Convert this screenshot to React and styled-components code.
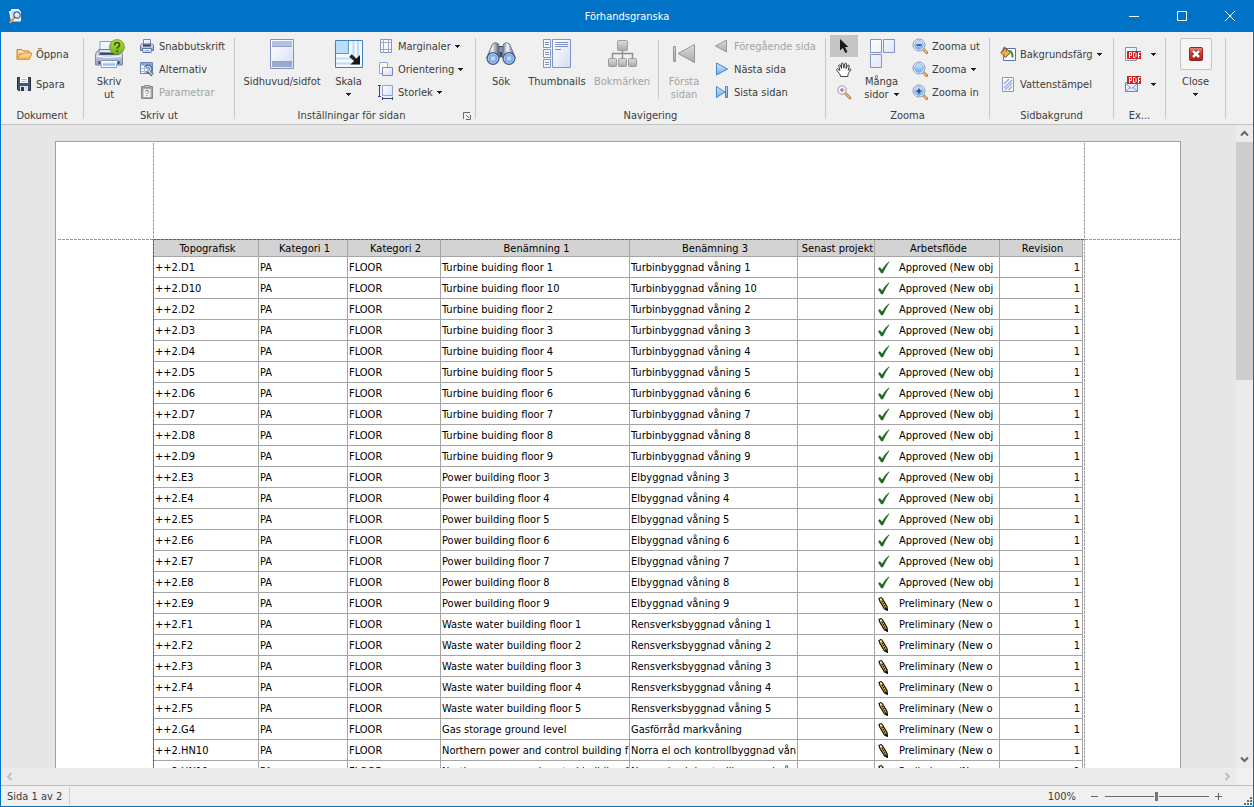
import React from 'react'
import styled, { createGlobalStyle } from 'styled-components'

const GlobalStyle = createGlobalStyle`
  * {
    box-sizing: border-box;
  }

  body {
    margin: 0;
    font-family: Tahoma, "DejaVu Sans Condensed", "DejaVu Sans", sans-serif;
    font-size: 11px;
    color: #3c3c3c;
  }

  button {
    border: 0;
    padding: 0;
    background: none;
    font: inherit;
    color: inherit;
  }

  svg {
    display: block;
    flex: none;
  }
`;

const Window = styled.div`
  display: flex;
  flex-direction: column;
  height: 100vh;
  overflow: hidden;
`;

const TitleBar = styled.header`
  display: grid;
  grid-template-columns: 1fr auto 1fr;
  align-items: center;
  flex: none;
  height: 32px;
  background: #0173c7;
  color: #fff;
`;

const SystemMenu = styled.div`
  padding-left: 8px;
`;

const Title = styled.h1`
  margin: 0;
  font-size: 11px;
  font-weight: normal;
`;

const WindowButtons = styled.div`
  display: flex;
  justify-content: flex-end;
`;

const WindowButton = styled.button`
  display: flex;
  align-items: center;
  justify-content: center;
  width: 48px;
  height: 32px;
`;

const Client = styled.div`
  display: flex;
  flex-direction: column;
  flex: 1;
  min-height: 0;
  border: solid #0173c7;
  border-width: 0 1px 1px;
  background: #f0f0f0;
`;

// Ribbon

const Ribbon = styled.nav`
  display: flex;
  flex: none;
  height: 93px;
  border-bottom: 1px solid #c3c3c3;
  background: #f0f0f0;
`;

const Group = styled.section`
  display: flex;
  flex-direction: column;
  flex: none;
  width: ${(p) => p.$width}px;
  padding-top: 3px;
`;

const GroupBody = styled.div`
  display: flex;
  height: 72px;
  padding-left: ${(p) => p.$start || 0}px;
  justify-content: ${(p) => (p.$center ? 'center' : 'flex-start')};
`;

const Caption = styled.div`
  display: flex;
  align-items: center;
  justify-content: center;
  height: 17px;
  padding-left: ${(p) => (p.$launcher ? 5 : 0)}px;
  line-height: 17px;
`;

const CaptionText = styled.span`
  flex: 1;
  text-align: center;
`;

const Launcher = styled.button`
  margin-right: 4px;
`;

const Separator = styled.div`
  flex: none;
  width: 1px;
  margin: 6px 0 5px;
  background: #c9c9c9;
`;

const InnerDivider = styled.div`
  width: 1px;
  margin: 5px 2px 8px 6px;
  background: #c9c9c9;
`;

const LargeButton = styled.button`
  display: flex;
  flex-direction: column;
  align-items: center;
  gap: 5px;
  width: ${(p) => p.$width}px;
  padding-top: 3px;
  line-height: 13px;
  white-space: nowrap;

  &:disabled {
    color: #a3a3a3;
  }
`;

const LargeLabel = styled.span`
  display: flex;
  flex-direction: column;
  align-items: center;
`;

const LabelLine = styled.span`
  display: flex;
  align-items: center;
  justify-content: center;
  gap: 5px;
  height: 13px;
`;

const Stack = styled.div`
  display: flex;
  flex-direction: column;
  gap: ${(p) => (p.$loose ? 8 : 1)}px;
  padding-top: ${(p) => (p.$loose ? 8 : 0)}px;
  margin-left: 4px;
`;

const SmallButton = styled.button`
  display: flex;
  align-items: center;
  gap: 4px;
  height: 22px;
  padding: 0 3px;
  line-height: 13px;
  white-space: nowrap;

  &:disabled {
    color: #a3a3a3;
  }
`;

const Tools = styled.div`
  display: flex;
  flex-direction: column;
  gap: 1px;
`;

const ToolButton = styled.button`
  display: flex;
  align-items: center;
  justify-content: center;
  width: 28px;
  height: 22px;
  background: ${(p) => (p.$active ? '#c5c5c5' : 'none')};
`;

const ExportButton = styled(SmallButton)`
  gap: 10px;
`;

const CloseFrame = styled.span`
  display: flex;
  align-items: center;
  justify-content: center;
  width: 32px;
  height: 32px;
  border: 1px solid #c6c6c6;
  border-radius: 2px;
  background: #f5f5f5;
`;

// Preview area

const Workspace = styled.main`
  display: grid;
  grid-template-columns: minmax(0, 1fr) 17px;
  grid-template-rows: minmax(0, 1fr) 17px;
  flex: 1;
  min-height: 0;
  border-bottom: 1px solid #bdbdbd;
  background: #e6e6e6;
`;

const Canvas = styled.div`
  overflow: hidden;
  padding: 16px 1px 0 0;
`;

const Paper = styled.div`
  display: grid;
  grid-template-columns: 97px auto 95px;
  grid-template-rows: 97px auto;
  width: max-content;
  margin: 0 auto;
  border: 1px solid #9f9f9f;
  background: #fff;
`;

const dashX = (color) => `repeating-linear-gradient(90deg, ${color} 0 3px, transparent 3px 4px)`;
const dashY = (color) => `repeating-linear-gradient(180deg, ${color} 0 3px, transparent 3px 4px)`;

const TopMargin = styled.div`
  grid-area: 1 / 2;
  margin-top: 1px;
  background: ${dashY('#9a9a9a')} left / 1px 100% no-repeat, ${dashY('#9a9a9a')} right / 1px 100% no-repeat;
`;

const SideMargin = styled.div`
  grid-area: 2 / ${(p) => (p.$left ? 1 : 3)};
  margin-left: ${(p) => (p.$left ? 2 : 0)}px;
  background: ${dashX('#9a9a9a')} top / 100% 1px no-repeat;
`;

const Printed = styled.div`
  grid-area: 2 / 2;
  padding: 1px 2px 0 1px;
  background:
    ${dashX('#5f5f5f')} top / 100% 1px no-repeat,
    ${dashY('#5f5f5f')} left / 1px 100% no-repeat,
    ${dashY('#9a9a9a')} right / 1px 100% no-repeat,
    linear-gradient(#a5a5a5, #a5a5a5) top / 100% 1px no-repeat,
    linear-gradient(#a5a5a5, #a5a5a5) left / 1px 100% no-repeat;
`;

const Table = styled.table`
  table-layout: fixed;
  width: 929px;
  border-spacing: 0;
  color: #000;
`;

const HeadCell = styled.th`
  height: 17px;
  padding: 0 0 0 3px;
  overflow: hidden;
  border: solid #a5a5a5;
  border-width: 0 1px 1px 0;
  background: #d3d3d3;
  font-weight: normal;
  line-height: 15px;
  white-space: nowrap;
`;

const Cell = styled.td`
  height: 21px;
  padding: 1px 2px 0 1px;
  overflow: hidden;
  border: solid #a5a5a5;
  border-width: 0 1px 1px 0;
  line-height: 19px;
  text-align: ${(p) => (p.$number ? 'right' : 'left')};
  white-space: nowrap;
`;

const Status = styled.span`
  display: flex;
  align-items: center;
  gap: 8px;
  padding-left: 1px;
`;

// Scroll bars

const VScroll = styled.div`
  display: flex;
  flex-direction: column;
  background: #ebebeb;
`;

const HScroll = styled.div`
  display: flex;
  justify-content: space-between;
  background: #ebebeb;
`;

const ScrollButton = styled.button`
  display: flex;
  flex: none;
  align-items: center;
  justify-content: center;
  width: 17px;
  height: 17px;
`;

const ScrollTrack = styled.div`
  flex: 1;
`;

const ScrollThumb = styled.div`
  height: 39%;
  background: #cdcdcd;
`;

const Corner = styled.div`
  background: #f0f0f0;
`;

// Status bar

const StatusBar = styled.footer`
  display: flex;
  flex: none;
  align-items: center;
  height: 20px;
  padding-left: 6px;
`;

const PageCount = styled.span`
  height: 18px;
  padding-right: 7px;
  border-right: 1px solid #cfcfcf;
  line-height: 19px;
`;

const ZoomBar = styled.div`
  display: flex;
  align-items: center;
  gap: 6px;
  margin-left: auto;
  padding-right: 21px;
`;

const ZoomLabel = styled.label`
  margin-right: 9px;
`;

const ZoomStep = styled.button`
  display: flex;
`;

const ZoomSlider = styled.input`
  appearance: none;
  width: 104px;
  height: 12px;
  margin: 0;
  background: linear-gradient(#6d6d6d, #6d6d6d) center / 100% 1px no-repeat;

  &::-webkit-slider-thumb {
    appearance: none;
    width: 5px;
    height: 9px;
    border: solid #f0f0f0;
    border-width: 0 1px;
    background: #757575;
  }
`;

const SizeGrip = styled.span`
  align-self: flex-end;
  margin: 0 1px 1px 0;
`;

// Icons

const Gradients = () => (
  <svg width="0" height="0" aria-hidden="true">
    <defs>
      <linearGradient id="paper" x1="0" y1="0" x2="1" y2="1">
        <stop offset="0" stopColor="#ffffff" />
        <stop offset="1" stopColor="#d3def5" />
      </linearGradient>
      <linearGradient id="sky" x1="0" y1="0" x2="0" y2="1">
        <stop offset="0" stopColor="#d6ecfc" />
        <stop offset="1" stopColor="#67aeea" />
      </linearGradient>
      <linearGradient id="gray" x1="0" y1="0" x2="0" y2="1">
        <stop offset="0" stopColor="#dcdcdc" />
        <stop offset="1" stopColor="#aaaaaa" />
      </linearGradient>
      <linearGradient id="steel" x1="0" y1="0" x2="0" y2="1">
        <stop offset="0" stopColor="#eef1f8" />
        <stop offset="1" stopColor="#8d9bbd" />
      </linearGradient>
      <linearGradient id="barrel" x1="0" y1="0" x2="1" y2="0">
        <stop offset="0" stopColor="#5a6684" />
        <stop offset=".4" stopColor="#f4f6fa" />
        <stop offset="1" stopColor="#3b4763" />
      </linearGradient>
      <linearGradient id="folder" x1="0" y1="0" x2="0" y2="1">
        <stop offset="0" stopColor="#ffe7b0" />
        <stop offset="1" stopColor="#f2b049" />
      </linearGradient>
      <radialGradient id="lens">
        <stop offset="0" stopColor="#d9f1ff" />
        <stop offset="1" stopColor="#4d8fe6" />
      </radialGradient>
      <linearGradient id="green" x1="0" y1="0" x2="0" y2="1">
        <stop offset="0" stopColor="#b8e23f" />
        <stop offset="1" stopColor="#6fb01a" />
      </linearGradient>
      <linearGradient id="red" x1="0" y1="0" x2="0" y2="1">
        <stop offset="0" stopColor="#e9887a" />
        <stop offset=".5" stopColor="#cf3a30" />
        <stop offset="1" stopColor="#a5201c" />
      </linearGradient>
    </defs>
  </svg>
);

const Icon = ({ size = 16, children }) => (
  <svg width={size} height={size} viewBox={`0 0 ${size} ${size}`} fill="none" aria-hidden="true">
    {children}
  </svg>
);

const Arrow = () => (
  <svg width="5" height="3" viewBox="0 0 5 3" aria-hidden="true">
    <path d="M0 0h5v1H4v1H3v1H2V2H1V1H0z" fill="#1e1e1e" />
  </svg>
);

const AppIcon = () => (
  <Icon>
    <path d="M1.500 3.500h2v-2h7l2 2V13H3.500z" fill="#e8eefb" stroke="#fff" />
    <path d="M4 4h3M4 6h2M4 8h1" stroke="#a8b8d8" />
    <path d="M6 10l-3.500 4" stroke="#e09a50" strokeWidth="2.400" strokeLinecap="round" />
    <circle cx="9" cy="7" r="3.200" fill="#cde9fb" stroke="#41618c" strokeWidth="1.200" />
    <path d="M7.600 7a1.600 1.600 0 0 1 1.600-1.600" stroke="#fff" />
  </Icon>
);

const FolderIcon = () => (
  <Icon>
    <path d="M1 13V3.500h4.500l1 1.500H13v2" fill="#f8cf83" stroke="#c5802c" />
    <path d="M2.500 5.500h3.300l1 1.200H12" stroke="#fff0cd" />
    <path d="M1 13.300L3.800 8H7l1-1h8l-2.600 6.300z" fill="url(#folder)" stroke="#d48a30" strokeLinejoin="round" />
  </Icon>
);

const SaveIcon = () => (
  <Icon>
    <path d="M1.500 1.500h13v13h-12l-1-1z" fill="#46546a" stroke="#212b3c" />
    <path d="M4 1h8v6H4z" fill="#f4f6fa" />
    <path d="M5.500 3.500h5M5.500 5.500h5" stroke="#b5becd" />
    <path d="M4 10h8v5H4z" fill="#d9dfe9" />
    <path d="M5 11h3v4H5z" fill="#2c384d" />
  </Icon>
);

const PrintIcon = () => (
  <Icon size={32}>
    <path d="M7 15V3.500h18V15" fill="url(#paper)" stroke="#8f9ec8" />
    <path d="M2.500 27V17q0-4 4-5H25.500q4 1 4 5v10z" fill="url(#steel)" stroke="#7c8bad" />
    <path d="M6 16.500V11.500h20v5z" fill="#dce3f1" stroke="#6f7d9f" />
    <path d="M7 15.500h18" stroke="#35415c" strokeWidth="2" />
    <path d="M3.500 18q12 3 25 0" stroke="#fff" />
    <path d="M5.500 23h21v3h-21z" fill="#3d4861" />
    <path d="M7.500 22.500h17l-1 7h-15z" fill="#f8faff" stroke="#8b9bc8" />
    <path d="M10 24.500h12v3H10z" fill="url(#sky)" />
    <circle cx="24" cy="9" r="7.300" fill="url(#green)" stroke="#66a017" />
    <path d="M21.500 7.200q.2-2.700 2.600-2.700 2.500 0 2.500 2.200 0 1.400-1.400 2.200-1 .6-1 1.900" stroke="#33580c" strokeWidth="1.600" />
    <path d="M23.300 12.300h1.800v1.700h-1.800z" fill="#33580c" />
  </Icon>
);

const QuickPrintIcon = () => (
  <Icon>
    <path d="M4.500 7V1.500h7V7" fill="url(#paper)" stroke="#7384b4" />
    <path d="M1.500 12.500v-5q0-1.500 2-1.500h9q2 0 2 1.500v5z" fill="url(#steel)" stroke="#5f70a0" />
    <path d="M4 7.500h8" stroke="#323e5c" strokeWidth="2" />
    <path d="M3.500 10.500h9l-.5 4H4z" fill="#fff" stroke="#5b6e9f" />
    <path d="M5.500 12h5v1.500h-5z" fill="#69b4ec" />
  </Icon>
);

const OptionsIcon = () => (
  <Icon>
    <path d="M1.500 1.500h12v11h-12z" fill="#fff" stroke="#6e84bb" />
    <path d="M2 2h11v2.500H2z" fill="#77a8de" />
    <path d="M2 7.500h11M2 10.500h11M5.500 2v10M9.500 2v10" stroke="#a8b9dc" />
    <path d="M7 6.500a2.600 2.600 0 1 1 .7 3.300M9.600 10.200l4 4" stroke="#4c5f88" strokeWidth="3.400" />
    <path d="M7.400 6.500a2.300 2.300 0 1 1 .5 3M9.600 10l4 4" stroke="#c3cfe6" strokeWidth="1.600" />
  </Icon>
);

const ParamsIcon = () => (
  <Icon>
    <path d="M2.500 2.500h11v12h-11z" fill="#a8a8a8" stroke="#858585" />
    <path d="M4.500 5h7v8h-7z" fill="#f0f0f0" />
    <path d="M5.500 1.500h5v2h-5z" fill="#d8d8d8" stroke="#858585" />
    <path d="M6.500 7.500q0-1.200 1.500-1.200t1.500 1.200q0 .8-.8 1.200-.7.400-.7 1.300M8 11v1" stroke="#777" />
  </Icon>
);

const HeaderFooterIcon = () => (
  <Icon size={32}>
    <path d="M4.500 1.500h23v29h-23z" fill="url(#paper)" stroke="#8390c0" />
    <path d="M6 3h20v5H6z" fill="#b5c1de" />
    <path d="M6 24h20v5H6z" fill="#9ba9cd" />
    <path d="M6 8.500h20M6 23.500h20" stroke="#93a0c7" />
  </Icon>
);

const ScaleIcon = () => (
  <Icon size={32}>
    <path d="M2.500 2.500h27v27h-27z" fill="#f6fafe" stroke="#4180bb" />
    <path d="M3 20.500h17.500V3M3 25.500h22V3" stroke="#bcdcf3" strokeWidth="2" />
    <path d="M3 3h12v12H3z" fill="#b9def8" />
    <path d="M15.500 3v12.500H3" stroke="#4f9cd9" />
    <path d="M17.500 17.500l6 5.500" stroke="#262626" strokeWidth="3.600" />
    <path d="M27 17v9.500h-9.500z" fill="#161616" />
  </Icon>
);

const MarginsIcon = () => (
  <Icon>
    <path d="M2.500 1.500h11v13h-11z" fill="#f8faff" stroke="#8391c3" />
    <path d="M5.500 1v14M10.500 1v14M2 4.500h12M2 11.500h12" stroke="#99a8d2" />
  </Icon>
);

const OrientationIcon = () => (
  <Icon>
    <path d="M1.500 1.500h8v11h-8z" fill="#fdfdff" stroke="#96a3cd" />
    <path d="M4.500 6.500h10v8h-10z" fill="url(#paper)" stroke="#7587bd" />
  </Icon>
);

const SizeIcon = () => (
  <Icon>
    <path d="M4.500 1.500h10v10h-10z" fill="url(#paper)" stroke="#96a3cd" />
    <path d="M1.500 1v11M0 1.500h3M0 12.500h3M4 14.500h11M4.500 13v3M14.500 13v3" stroke="#34467c" />
  </Icon>
);

const LauncherIcon = () => (
  <svg width="8" height="8" viewBox="0 0 8 8" fill="none" aria-hidden="true">
    <path d="M.5 7V.5H7M3 3l3 3M7.500 3v4.500H3" stroke="#6a6a6a" />
  </svg>
);

const BinocularsIcon = () => (
  <Icon size={32}>
    <path d="M12 8h8v11h-8z" fill="#35425e" />
    <path d="M7.500 6q3-3 6 0l1.500 14H1.500z" fill="url(#barrel)" stroke="#6c7791" />
    <path d="M18.500 6q3-3 6 0l6 14H17z" fill="url(#barrel)" stroke="#6c7791" />
    <path d="M14.500 9h3v5h-3z" fill="#8a97b4" />
    <circle cx="8" cy="20.500" r="6.500" fill="#4b5878" />
    <circle cx="24" cy="20.500" r="6.500" fill="#4b5878" />
    <circle cx="8" cy="20.500" r="4.800" fill="url(#lens)" stroke="#c6d7f3" />
    <circle cx="24" cy="20.500" r="4.800" fill="url(#lens)" stroke="#c6d7f3" />
  </Icon>
);

const ThumbnailsIcon = () => (
  <Icon size={32}>
    <g fill="#f5f8ff" stroke="#8292c6">
      <path d="M2.500 1.500h7v8h-7zM2.500 11.500h7v8h-7zM2.500 21.500h7v8h-7z" />
      <path d="M11.500 1.500h18v28h-18z" fill="url(#paper)" />
    </g>
    <path d="M4 4.500h4M4 6.500h4M4 14.500h4M4 16.500h4M4 24.500h4M4 26.500h4M14 4.500h13M14 6.500h13M14 8.500h13M14 11.500h6" stroke="#8292c6" />
  </Icon>
);

const BookmarksIcon = () => (
  <Icon size={32}>
    <path d="M16.500 12v8M6.500 20v-4.500h20V20" stroke="#8c8c8c" strokeWidth="1.400" />
    <g fill="url(#gray)" stroke="#9c9c9c">
      <rect x="11.500" y="2.500" width="10" height="10" rx="1" />
      <rect x="2.500" y="20.500" width="8" height="8" rx="1" />
      <rect x="12.500" y="20.500" width="8" height="8" rx="1" />
      <rect x="22.500" y="20.500" width="8" height="8" rx="1" />
    </g>
  </Icon>
);

const FirstIcon = () => (
  <Icon size={32}>
    <path d="M5.500 8.500h2v15h-2zM26.500 6.500v18L10 15.500z" fill="url(#gray)" stroke="#969696" strokeLinejoin="round" />
  </Icon>
);

const PrevIcon = () => (
  <Icon>
    <path d="M12.500 2v12L1.500 8z" fill="url(#gray)" stroke="#9a9a9a" strokeLinejoin="round" />
  </Icon>
);

const NextIcon = () => (
  <Icon>
    <path d="M2.500 2v12L13.500 8z" fill="url(#sky)" stroke="#4684c4" strokeLinejoin="round" />
  </Icon>
);

const LastIcon = () => (
  <Icon>
    <path d="M2.500 2.500v11L11 8zM11.500 2.500h2v11h-2z" fill="url(#sky)" stroke="#4684c4" strokeLinejoin="round" />
  </Icon>
);

const PointerIcon = () => (
  <Icon>
    <path d="M4 1l8.500 8H9l2.500 5-2.200 1-2.500-5L4 12.500z" fill="#1b1b1b" />
  </Icon>
);

const HandIcon = () => (
  <Icon>
    <path d="M4.500 15.500q0-2-1.700-3.600L.8 9.300q-.5-1.300.8-1.500l2.400 1.800-1.300-5q.4-1.300 1.500-.6l1.400 3.500-.2-5q.7-1.200 1.600-.1l.9 4.700 1-4.600q1-.9 1.600.2l-.5 5 1.900-3.400q1.200-.6 1.300.6l-1 4.500 1.600-1.500q1.300-.2 1 .9l-2.400 3.600q-.5 1-.6 3.100z" fill="#fff" stroke="#2c2c2c" strokeWidth=".9" strokeLinejoin="round" />
  </Icon>
);

const MagnifierIcon = () => (
  <Icon>
    <path d="M9.500 9.500l4.500 4.500" stroke="#a76a2a" strokeWidth="2.600" strokeLinecap="round" />
    <path d="M9.500 9.500l4.300 4.300" stroke="#f3c27c" strokeWidth="1.300" strokeLinecap="round" />
    <circle cx="6" cy="6" r="4.200" fill="#edf6ff" stroke="#8d9cbf" />
    <circle cx="6" cy="6" r="1.200" fill="#fff" stroke="#c8332b" />
  </Icon>
);

const ManyPagesIcon = () => (
  <Icon size={32}>
    <path d="M4.500 1.500h11v13h-11zM17.500 1.500h11v13h-11zM4.500 16.500h11v13h-11z" fill="url(#paper)" stroke="#8592c4" />
  </Icon>
);

const ZoomIcon = ({ sign }) => (
  <Icon>
    <path d="M11 11l3.600 3.600" stroke="#a66b33" strokeWidth="2.800" strokeLinecap="round" />
    <path d="M11 11l3.400 3.400" stroke="#f2b878" strokeWidth="1.500" strokeLinecap="round" />
    <circle cx="7" cy="7" r="6" fill="#f8fbff" stroke="#8494bd" />
    <circle cx="7" cy="7" r="4.400" fill="url(#sky)" stroke="#7aa4da" strokeWidth=".8" />
    {sign && <path d={sign === 'plus' ? 'M4.500 7h5M7 4.500v5' : 'M4.500 7h5'} stroke="#2c3f86" strokeWidth="1.500" />}
  </Icon>
);

const FillColorIcon = () => (
  <Icon>
    <path d="M3.500 2.500h12v12h-12z" fill="#f8faff" stroke="#5f74ac" />
    <path d="M.8 6.300L5.600 2l5 4.500-5 5z" fill="#edab53" stroke="#82501c" />
    <path d="M3.200 5.500q-.5-4.500 1.500-4.500 1.500 0 1.800 4.500" stroke="#6f5a45" />
    <path d="M8.500 5q4-.5 4 6.500" stroke="#2f9b2f" strokeWidth="2" />
  </Icon>
);

const WatermarkIcon = () => (
  <Icon>
    <path d="M2.500 1.500h11v14h-11z" fill="#f6f9ff" stroke="#8999c5" />
    <path d="M4 8l5-5M4 12l8-8M5 14l7-7M8.500 14l3.500-3.500" stroke="#91a9d8" strokeWidth="1.200" />
  </Icon>
);

const PdfBadge = ({ y }) => (
  <g transform={`translate(2 ${y})`}>
    <path d="M0 0h14v8H0z" fill="#d02424" />
    <path d="M2.500 7V1.500h2v3h-2M6.500 1.500h1.500l1 1v3l-1 1H6.500zM11.500 7V1.500h2M11.500 4.500h1.500" stroke="#fff" />
  </g>
);

const PdfExportIcon = () => (
  <Icon>
    <path d="M.5 1.500h11v13H.5z" fill="url(#paper)" stroke="#8192be" />
    <PdfBadge y={5} />
  </Icon>
);

const PdfMailIcon = () => (
  <Icon>
    <path d="M.5 6.500h12v9H.5z" fill="url(#paper)" stroke="#6f86b8" />
    <path d="M.5 7.500l6 5 6-5M.5 15.500l4.500-4M12.500 15.500L8 11.500" stroke="#7f94c2" />
    <PdfBadge y={0} />
  </Icon>
);

const CloseIcon = () => (
  <svg width="14" height="14" viewBox="0 0 14 14" fill="none" aria-hidden="true">
    <rect x=".5" y=".5" width="13" height="13" rx="1" fill="url(#red)" stroke="#93241f" />
    <path d="M4 4l6 6M10 4l-6 6" stroke="#8c1b17" strokeWidth="4.400" />
    <path d="M4 4l6 6M10 4l-6 6" stroke="#fff" strokeWidth="2.600" />
  </svg>
);

const CheckIcon = () => (
  <svg width="14" height="14" viewBox="0 0 14 14" aria-hidden="true">
    <path d="M1.500 7.500l1.500-1 2 2.800Q7.500 4 12 .8 8.500 6 5.700 12H4.300z" fill="#1a6f1a" stroke="#145514" strokeWidth=".6" />
  </svg>
);

const PencilIcon = () => (
  <svg width="14" height="14" viewBox="0 0 14 14" fill="none" aria-hidden="true">
    <path d="M2 1.500L4 .6l1.500 1.200L10 9.500l.4 3.800-3-1.600L3 4.500z" fill="#e9b22f" stroke="#111" strokeWidth="1.200" />
    <path d="M2.800 1.800l1.200-.5 1 1-1.600 1.200z" fill="#fff" />
    <path d="M5 4l3.700 6.800" stroke="#111" strokeWidth="1.200" strokeDasharray="1.400 1" />
    <path d="M10.500 13.800l-3-1.800 2.500-1.500z" fill="#111" />
  </svg>
);

const Chevron = ({ d, color = '#666' }) => (
  <svg width="9" height="9" viewBox="0 0 9 9" fill="none" aria-hidden="true">
    <path d={d} stroke={color} strokeWidth="2" />
  </svg>
);

// Data

const columns = [
  ['Topografisk', 105],
  ['Kategori 1', 89],
  ['Kategori 2', 93],
  ['Benämning 1', 189],
  ['Benämning 3', 168],
  ['Senast projekt', 77],
  ['Arbetsflöde', 125],
  ['Revision', 83],
];

const rows = [
  ['++2.D1', 'Turbine buiding floor 1', 'Turbinbyggnad våning 1', true],
  ['++2.D10', 'Turbine buiding floor 10', 'Turbinbyggnad våning 10', true],
  ['++2.D2', 'Turbine buiding floor 2', 'Turbinbyggnad våning 2', true],
  ['++2.D3', 'Turbine buiding floor 3', 'Turbinbyggnad våning 3', true],
  ['++2.D4', 'Turbine buiding floor 4', 'Turbinbyggnad våning 4', true],
  ['++2.D5', 'Turbine buiding floor 5', 'Turbinbyggnad våning 5', true],
  ['++2.D6', 'Turbine buiding floor 6', 'Turbinbyggnad våning 6', true],
  ['++2.D7', 'Turbine buiding floor 7', 'Turbinbyggnad våning 7', true],
  ['++2.D8', 'Turbine buiding floor 8', 'Turbinbyggnad våning 8', true],
  ['++2.D9', 'Turbine buiding floor 9', 'Turbinbyggnad våning 9', true],
  ['++2.E3', 'Power building floor 3', 'Elbyggnad våning 3', true],
  ['++2.E4', 'Power building floor 4', 'Elbyggnad våning 4', true],
  ['++2.E5', 'Power building floor 5', 'Elbyggnad våning 5', true],
  ['++2.E6', 'Power building floor 6', 'Elbyggnad våning 6', true],
  ['++2.E7', 'Power building floor 7', 'Elbyggnad våning 7', true],
  ['++2.E8', 'Power building floor 8', 'Elbyggnad våning 8', true],
  ['++2.E9', 'Power building floor 9', 'Elbyggnad våning 9', false],
  ['++2.F1', 'Waste water building floor 1', 'Rensverksbyggnad våning 1', false],
  ['++2.F2', 'Waste water building floor 2', 'Rensverksbyggnad våning 2', false],
  ['++2.F3', 'Waste water building floor 3', 'Rensverksbyggnad våning 3', false],
  ['++2.F4', 'Waste water building floor 4', 'Rensverksbyggnad våning 4', false],
  ['++2.F5', 'Waste water building floor 5', 'Rensverksbyggnad våning 5', false],
  ['++2.G4', 'Gas storage ground level', 'Gasförråd markvåning', false],
  ['++2.HN10', 'Northern power and control building f', 'Norra el och kontrollbyggnad vån', false],
  ['++2.HN11', 'Northern power and control building f', 'Norra el och kontrollbyggnad vån', false],
];

// Parts

const Large = ({ icon, lines, width, arrow, disabled }) => (
  <LargeButton $width={width} disabled={disabled}>
    {icon}
    <LargeLabel>
      {lines.map((line, i) => (
        <LabelLine key={line}>
          {line}
          {arrow === 'inline' && i === lines.length - 1 && <Arrow />}
        </LabelLine>
      ))}
      {arrow === 'below' && <LabelLine><Arrow /></LabelLine>}
    </LargeLabel>
  </LargeButton>
);

const Small = ({ icon, label, arrow, disabled }) => (
  <SmallButton disabled={disabled}>
    {icon}
    <span>{label}</span>
    {arrow && <Arrow />}
  </SmallButton>
);

const RibbonGroup = ({ caption, width, start, center, launcher, children }) => (
  <>
    <Group $width={width}>
      <GroupBody $start={start} $center={center}>{children}</GroupBody>
      {caption && (
        <Caption $launcher={launcher}>
          <CaptionText>{caption}</CaptionText>
          {launcher && <Launcher aria-label={caption}><LauncherIcon /></Launcher>}
        </Caption>
      )}
    </Group>
    <Separator />
  </>
);

const App = () => {
  return (
    <Window>
      <GlobalStyle />
      <Gradients />
      <TitleBar>
        <SystemMenu><AppIcon /></SystemMenu>
        <Title>Förhandsgranska</Title>
        <WindowButtons>
          <WindowButton aria-label="Minimera">
            <svg width="10" height="10"><path d="M0 5.500h10" stroke="#fff" /></svg>
          </WindowButton>
          <WindowButton aria-label="Maximera">
            <svg width="10" height="10"><path d="M.5.5h9v9h-9z" stroke="#fff" fill="none" /></svg>
          </WindowButton>
          <WindowButton aria-label="Stäng">
            <svg width="10" height="10"><path d="M0 0l10 10M10 0L0 10" stroke="#fff" /></svg>
          </WindowButton>
        </WindowButtons>
      </TitleBar>

      <Client>
        <Ribbon>
          <RibbonGroup caption="Dokument" width={82} start={8}>
            <Stack $loose>
              <Small icon={<FolderIcon />} label="Öppna" />
              <Small icon={<SaveIcon />} label="Spara" />
            </Stack>
          </RibbonGroup>

          <RibbonGroup caption="Skriv ut" width={150} start={2}>
            <Large icon={<PrintIcon />} lines={['Skriv', 'ut']} width={46} />
            <Stack>
              <Small icon={<QuickPrintIcon />} label="Snabbutskrift" />
              <Small icon={<OptionsIcon />} label="Alternativ" />
              <Small icon={<ParamsIcon />} label="Parametrar" disabled />
            </Stack>
          </RibbonGroup>

          <RibbonGroup caption="Inställningar för sidan" width={240} start={3} launcher>
            <Large icon={<HeaderFooterIcon />} lines={['Sidhuvud/sidfot']} width={88} />
            <Large icon={<ScaleIcon />} lines={['Skala']} width={45} arrow="below" />
            <Stack>
              <Small icon={<MarginsIcon />} label="Marginaler" arrow />
              <Small icon={<OrientationIcon />} label="Orientering" arrow />
              <Small icon={<SizeIcon />} label="Storlek" arrow />
            </Stack>
          </RibbonGroup>

          <RibbonGroup caption="Navigering" width={349} start={4}>
            <Large icon={<BinocularsIcon />} lines={['Sök']} width={42} />
            <Large icon={<ThumbnailsIcon />} lines={['Thumbnails']} width={70} />
            <Large icon={<BookmarksIcon />} lines={['Bokmärken']} width={60} disabled />
            <InnerDivider />
            <Large icon={<FirstIcon />} lines={['Första', 'sidan']} width={46} disabled />
            <Stack>
              <Small icon={<PrevIcon />} label="Föregående sida" disabled />
              <Small icon={<NextIcon />} label="Nästa sida" />
              <Small icon={<LastIcon />} label="Sista sidan" />
            </Stack>
          </RibbonGroup>

          <RibbonGroup caption="Zooma" width={163} start={4}>
            <Tools>
              <ToolButton $active aria-label="Pekare"><PointerIcon /></ToolButton>
              <ToolButton aria-label="Handverktyg"><HandIcon /></ToolButton>
              <ToolButton aria-label="Förstoringsglas"><MagnifierIcon /></ToolButton>
            </Tools>
            <Large icon={<ManyPagesIcon />} lines={['Många', 'sidor']} width={47} arrow="inline" />
            <Stack>
              <Small icon={<ZoomIcon sign="minus" />} label="Zooma ut" />
              <Small icon={<ZoomIcon />} label="Zooma" arrow />
              <Small icon={<ZoomIcon sign="plus" />} label="Zooma in" />
            </Stack>
          </RibbonGroup>

          <RibbonGroup caption="Sidbakgrund" width={123} start={3}>
            <Stack $loose>
              <Small icon={<FillColorIcon />} label="Bakgrundsfärg" arrow />
              <Small icon={<WatermarkIcon />} label="Vattenstämpel" />
            </Stack>
          </RibbonGroup>

          <RibbonGroup caption="Ex..." width={51} start={4}>
            <Stack $loose>
              <ExportButton aria-label="Exportera till PDF"><PdfExportIcon /><Arrow /></ExportButton>
              <ExportButton aria-label="Skicka som PDF"><PdfMailIcon /><Arrow /></ExportButton>
            </Stack>
          </RibbonGroup>

          <RibbonGroup width={59} center>
            <Large icon={<CloseFrame><CloseIcon /></CloseFrame>} lines={['Close']} width={46} arrow="below" />
          </RibbonGroup>
        </Ribbon>

        <Workspace>
          <Canvas>
            <Paper>
              <TopMargin />
              <SideMargin $left />
              <Printed>
                <Table>
                  <colgroup>
                    {columns.map(([name, width]) => <col key={name} width={width} />)}
                  </colgroup>
                  <thead>
                    <tr>
                      {columns.map(([name]) => <HeadCell key={name} scope="col">{name}</HeadCell>)}
                    </tr>
                  </thead>
                  <tbody>
                    {rows.map(([code, name1, name3, approved]) => (
                      <tr key={code}>
                        <Cell>{code}</Cell>
                        <Cell>PA</Cell>
                        <Cell>FLOOR</Cell>
                        <Cell>{name1}</Cell>
                        <Cell>{name3}</Cell>
                        <Cell />
                        <Cell>
                          <Status>
                            {approved ? <CheckIcon /> : <PencilIcon />}
                            {approved ? 'Approved (New obj' : 'Preliminary (New o'}
                          </Status>
                        </Cell>
                        <Cell $number>1</Cell>
                      </tr>
                    ))}
                  </tbody>
                </Table>
              </Printed>
              <SideMargin />
            </Paper>
          </Canvas>
          <VScroll>
            <ScrollButton aria-label="Upp"><Chevron d="M1 6.500L4.500 3 8 6.500" /></ScrollButton>
            <ScrollTrack><ScrollThumb /></ScrollTrack>
            <ScrollButton aria-label="Ned"><Chevron d="M1 2.500L4.500 6 8 2.500" /></ScrollButton>
          </VScroll>
          <HScroll>
            <ScrollButton aria-label="Vänster"><Chevron d="M6.500 1L3 4.500 6.500 8" color="#bfbfbf" /></ScrollButton>
            <ScrollButton aria-label="Höger"><Chevron d="M2.500 1L6 4.500 2.500 8" color="#bfbfbf" /></ScrollButton>
          </HScroll>
          <Corner />
        </Workspace>

        <StatusBar>
          <PageCount>Sida 1 av 2</PageCount>
          <ZoomBar>
            <ZoomLabel htmlFor="zoom">100%</ZoomLabel>
            <ZoomStep aria-label="Zooma ut">
              <svg width="8" height="7"><path d="M0 3.500h7" stroke="#666" /></svg>
            </ZoomStep>
            <ZoomSlider id="zoom" type="range" min="0" max="200" defaultValue="98" />
            <ZoomStep aria-label="Zooma in">
              <svg width="8" height="7"><path d="M0 3.500h7M3.500 0v7" stroke="#666" /></svg>
            </ZoomStep>
          </ZoomBar>
          <SizeGrip>
            <svg width="8" height="8" aria-hidden="true">
              <path d="M6 0h2v2H6zM3 3h2v2H3zM6 3h2v2H6zM0 6h2v2H0zM3 6h2v2H3zM6 6h2v2H6z" fill="#6d6d6d" />
            </svg>
          </SizeGrip>
        </StatusBar>
      </Client>
    </Window>
  )
}

export default App
